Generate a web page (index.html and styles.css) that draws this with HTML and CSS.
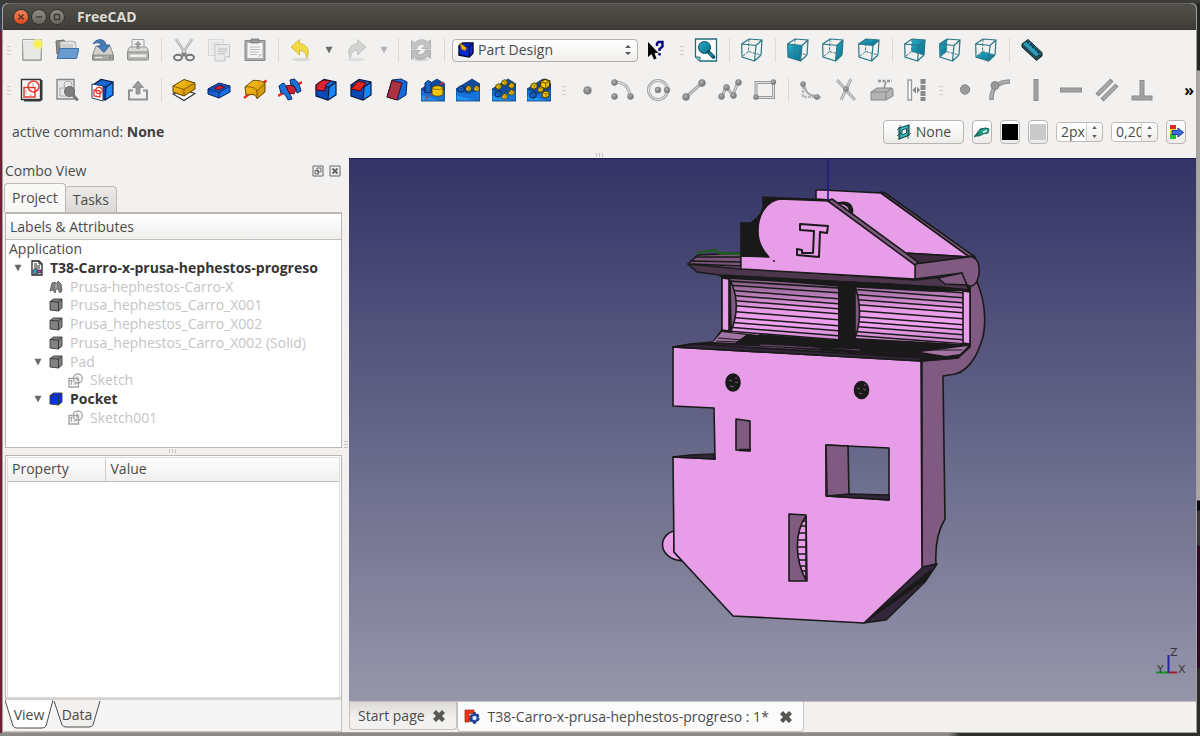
FILE: index.html
```html
<!DOCTYPE html>
<html lang="en">
<head>
<meta charset="utf-8">
<title>FreeCAD</title>
<link rel="stylesheet" href="styles.css">
</head>
<body>
<svg class="sprites" aria-hidden="true">
  <defs>
    <linearGradient id="g-gold" x1="0" y1="0" x2="1" y2="1"><stop offset="0" stop-color="#ffc81e"/><stop offset="1" stop-color="#c98a00"/></linearGradient>
    <linearGradient id="g-blue" x1="0" y1="0" x2="1" y2="1"><stop offset="0" stop-color="#0a3fae"/><stop offset="1" stop-color="#1f86f5"/></linearGradient>
    <linearGradient id="g-teal" x1="0" y1="0" x2="1" y2="1"><stop offset="0" stop-color="#2ba9c9"/><stop offset="1" stop-color="#04708c"/></linearGradient>
    <linearGradient id="g-grey" x1="0" y1="0" x2="0" y2="1"><stop offset="0" stop-color="#f4f4f4"/><stop offset="1" stop-color="#b4b4b4"/></linearGradient>
    <radialGradient id="g-ball" cx=".4" cy=".35"><stop offset="0" stop-color="#b4b4b4"/><stop offset="1" stop-color="#7c7c7c"/></radialGradient>
    <symbol id="ball" viewBox="0 0 8 8"><circle cx="4" cy="4" r="3.4" fill="url(#g-ball)" stroke="#868686" stroke-width=".8"/></symbol>
    <symbol id="box" viewBox="0 0 24 24"><path d="M2 7 10 1.500 22 4 15 9Z" fill="#1467d6"/><path d="M2 7 15 9 14 22 2 18Z" fill="#0a49b8"/><path d="M15 9 22 4 22 17 14 22Z" fill="#1a86f7"/><path d="M2 7 10 1.500 22 4V17L14 22 2 18ZM2 7 15 9 22 4M15 9 14 22" fill="none" stroke="#061a3f" stroke-width="1.200"/></symbol>
    <symbol id="wire" viewBox="0 0 24 24"><path d="M1.700 6 16 7.500 14.500 23 2 19ZM9 1 22 2 21 17M1.700 6 9 1M16 7.500 22 2M14.500 23 21 17" fill="none" stroke="#2b7686" stroke-width="1.200"/><path d="M9 1 8.500 13.500 21 17M8.500 13.500 2 19" fill="none" stroke="#3c7885" stroke-width="1" stroke-dasharray="3 1.200"/></symbol>
    <symbol id="hill" viewBox="0 0 24 24"><path d="M0 11 16 1 24 6V23H0Z" fill="#104c9e"/><path d="M0 12 12 16 24 12V23H0Z" fill="#1673da"/><path d="M0 23 0 17 20 23Z" fill="#2494f4"/><path d="M0 11 16 1 24 6V23H0Z" fill="none" stroke="#0b376e" stroke-width=".8"/></symbol>
    <symbol id="nugget" viewBox="0 0 8 8"><path d="M1 2.500 4 .8 7.200 2 7 5.500 4.500 7.300 1 6Z" fill="#eec40c" stroke="#453600" stroke-width=".9"/><path d="M1 2.500 4.500 3.500 7.200 2M4.500 3.500V7" fill="none" stroke="#7e6300" stroke-width=".7"/></symbol>
    <symbol id="cubelet" viewBox="0 0 8 8"><path d="M1 2.500 4 .8 7.200 2 7 5.500 4.500 7.300 1 6Z" fill="#1c6fd8" stroke="#04183d" stroke-width=".9"/><path d="M1 2.500 4.500 3.500 7.200 2M4.500 3.500V7" fill="none" stroke="#08306b" stroke-width=".7"/></symbol>
    <symbol id="mini-solid" viewBox="0 0 14 14"><path d="M1 3.500 4.500 1H13V10L9.500 13 1 12Z" fill="currentColor" stroke="#3c3c3c" stroke-width=".9"/><path d="M1 3.500 9.500 4 13 1M9.500 4V13" fill="none" stroke="#303030" stroke-width=".9"/></symbol>
    <symbol id="mini-sketch" viewBox="0 0 15 15"><path d="M1 5.500H10.500V14H1Z" fill="none" stroke="#a4a4a4" stroke-width="1.400"/><circle cx="9.800" cy="5.500" r="4.500" fill="none" stroke="#a4a4a4" stroke-width="1.300"/><path d="M3.300 7V12M2.200 8.500 3.300 7 4.500 8.500M9 3V8M5.500 11H8.500" fill="none" stroke="#999"/></symbol>
    <symbol id="tri" viewBox="0 0 8 8"><path d="M.5 .7H7.500L4 7.500Z" fill="currentColor"/></symbol>
    <symbol id="x-mark" viewBox="0 0 12 12"><path d="M3 0 6 3 9 0 12 3 9 6 12 9 9 12 6 9 3 12 0 9 3 6 0 3Z" fill="#565653"/></symbol>
  </defs>
</svg>

<div class="desktop">
<main class="window">
  <header class="titlebar">
    <button class="wm wm-close" aria-label="Close"><svg viewBox="0 0 8 8"><path d="M1.500 1.500 6.500 6.500M6.500 1.500 1.500 6.500"/></svg></button>
    <button class="wm" aria-label="Minimize"><svg viewBox="0 0 8 8"><path d="M1 4H7"/></svg></button>
    <button class="wm" aria-label="Maximize"><svg viewBox="0 0 8 8"><path d="M1.500 1.500H6.500V6.500H1.500Z"/></svg></button>
    <h1>FreeCAD</h1>
  </header>

  <div class="toolbars">
    <div class="bar">
      <i class="handle first"></i>
      <div class="group g4">
        <button aria-label="New"><svg viewBox="0 0 24 24"><path d="M2.500 1.500H21.500V22.500H2.500Z" fill="url(#g-grey)" stroke="#a6a6a0"/><path d="M4 3H20V21H4Z" fill="#e8e8e6"/><circle cx="18" cy="6" r="5.500" fill="#f5f07a" opacity=".75"/><circle cx="18" cy="6" r="2.800" fill="#fdf42d"/></svg></button>
        <button aria-label="Open"><svg viewBox="0 0 24 24"><path d="M1 3 9 2 10 4H20V16H2Z" fill="#8c8c88" stroke="#6d6d69"/><path d="M5 4 18 3 21 6V14H6Z" fill="#e4e4e2" stroke="#aaa" stroke-width=".8"/><path d="M7 7H18M7 9H18" stroke="#b5b5b5"/><path d="M5 10.500H24L21.500 20.500H2Z" fill="#6a9bcf" stroke="#3e6fa6"/></svg></button>
        <button aria-label="Save"><svg viewBox="0 0 24 24"><path d="M5 8H19L22.500 17V22H1.500V17Z" fill="#d2d2ce" stroke="#8b8b86"/><path d="M2 17H22V22H2Z" fill="#aaaaa6" stroke="#858580" stroke-width=".8"/><path d="M4 19.500H11" stroke="#eee"/><circle cx="19" cy="19.500" r="1" fill="#6f6f6c"/><path d="M2 6C5 0 14 0 15 7H19L13 14.500 6.500 8H10C9 4 6 4 2 6Z" fill="#4a7eba" stroke="#285790" stroke-width=".8"/></svg></button>
        <button aria-label="Print"><svg viewBox="0 0 24 24"><path d="M6 1.500H18V12H6Z" fill="#f2f2f2" stroke="#a3a3a3"/><path d="M2 11 4 9H20L22 11V17H2Z" fill="#d8d8d6" stroke="#979793"/><path d="M1.500 14H22.500V21Q22.500 22 21 22H3Q1.500 22 1.500 21Z" fill="#b6b6b3" stroke="#8a8a86"/><path d="M4 16.500H20V19H4Z" fill="#eee"/><path d="M12 3 16 7H13.500V11H10.500V7H8Z" fill="#9b9b9b"/></svg></button>
      </div>
      <i class="sep"></i>
      <div class="group g3">
        <button aria-label="Cut"><svg viewBox="0 0 24 24"><path d="M4 1 14.500 17M20 1 9.500 17" stroke="#b5b5b5" stroke-width="2.800"/><path d="M4.500 1 14.500 17M19.500 1 9.500 17" stroke="#ddd"/><ellipse cx="6" cy="19.500" rx="4" ry="2.800" fill="none" stroke="#777" stroke-width="2"/><ellipse cx="18" cy="19.500" rx="4" ry="2.800" fill="none" stroke="#777" stroke-width="2"/><path d="M10 15 13.500 18M14 15 10.500 18" stroke="#808080" stroke-width="2"/></svg></button>
        <button aria-label="Copy"><svg viewBox="0 0 24 24"><path d="M1.500 1.500H16V17.500H1.500Z" fill="#ededed" stroke="#d6d6d6"/><path d="M4 5H13M4 8H10M4 11H8" stroke="#d8d8d8"/><path d="M8 6.500H22.500V19L18 23H8Z" fill="#eaeaea" stroke="#c5c5c5"/><path d="M11 11H20M11 13.500H20M11 16H18" stroke="#c9c9c9" stroke-width="1.300"/><path d="M22.500 19H18V23" fill="#fff" stroke="#bbb"/></svg></button>
        <button aria-label="Paste"><svg viewBox="0 0 24 24"><path d="M2 2.500H22V22.500H2Z" fill="#aaa" stroke="#878787"/><path d="M4.500 5H19.500V20H4.500Z" fill="#f4f4f4"/><path d="M8 1H16V5H8Z" fill="#999" stroke="#777" stroke-width=".8"/><path d="M7 9H17M7 11.500H17M7 14H16M7 16.500H14" stroke="#bcbcbc"/><path d="M19.500 16H15.500V20Z" fill="#ccc"/></svg></button>
      </div>
      <i class="sep"></i>
      <button class="tool" aria-label="Undo"><svg viewBox="0 0 24 24"><ellipse cx="12" cy="21.500" rx="9" ry="1.800" fill="#dadad6"/><path d="M2 9 10.500 1.500V5.500C18 6 22 13 17.500 20.500 17 15 15 12.500 10.500 12.500V17Z" fill="#f2da44" stroke="#cbb331" stroke-width=".8"/></svg></button>
      <button class="drop" aria-label="Undo list"><svg viewBox="0 0 8 8"><use href="#tri"/></svg></button>
      <button class="tool" aria-label="Redo"><svg viewBox="0 0 24 24"><ellipse cx="12" cy="21.500" rx="9" ry="1.800" fill="#e0e0de"/><path d="M22 9 13.500 1.500V5.500C6 6 2 13 6.500 20.500 7 15 9 12.500 13.500 12.500V17Z" fill="#d2d2d0" stroke="#bdbdbb" stroke-width=".8"/></svg></button>
      <button class="drop pale" aria-label="Redo list"><svg viewBox="0 0 8 8"><use href="#tri"/></svg></button>
      <i class="sep"></i>
      <button class="tool" aria-label="Refresh"><svg viewBox="0 0 24 24"><ellipse cx="12" cy="21.500" rx="8" ry="1.800" fill="#d6d6d4"/><path d="M2.500 11V2.500L5.500 5C10 .5 16 1 18.500 4L21.500 2V10.500H13L16 7.500C13 5 9 6.500 7.500 11Z" fill="#c4c4c2" stroke="#aaa" stroke-width=".8"/><path d="M21.500 12V20.500L18.500 18C14 22.500 8 22 5.500 19L2.500 21.500V12.500H11L8 15.500C11 18 15 16.500 16.500 12Z" fill="#bebebc" stroke="#a2a2a2" stroke-width=".8"/></svg></button>
      <i class="sep"></i>
      <label class="combo">
        <svg viewBox="0 0 17 17"><path d="M1 4 5 1H16V12L12 16 1 14Z" fill="#0a28d0" stroke="#000520" stroke-width="1.300"/><path d="M1 4 12 5 16 1M12 5V16" stroke="#000a40" stroke-width="1.200" fill="none"/><path d="M2 1 9 6 8 9 4 8Z" fill="#f1ab13" stroke="#9c6b00" stroke-width=".6"/></svg>
        <select aria-label="Workbench"><option>Part Design</option></select>
        <span class="arrows"><svg viewBox="0 0 8 12"><path d="M1 4 4 1 7 4ZM1 8 4 11 7 8Z" fill="#555"/></svg></span>
      </label>
      <button class="tool" aria-label="What's this?"><svg viewBox="0 0 24 24"><path d="M3 4V19L6.500 16 9 21.500 11.500 20.500 9.500 15H13.500Z" fill="#000"/><path d="M12 8V5.500L13.500 4H17.500V8.500L14.500 11V13M14.500 15V17.500" stroke="#060680" stroke-width="2.400" fill="none"/></svg></button>
      <i class="handle mid"></i>
      <button class="tool" aria-label="Fit all"><svg viewBox="0 0 24 24"><path d="M1.500 1H22.500V23H6L1.500 19Z" fill="#fff" stroke="#236c7a" stroke-width="1.300"/><path d="M1.500 19H6V23" fill="#9cc" stroke="#236c7a"/><circle cx="10.500" cy="9.500" r="6" fill="url(#g-teal)" stroke="#044c5f"/><path d="M14.500 14 19.500 19" stroke="#07495a" stroke-width="3.800" stroke-linecap="round"/><path d="M15 14.500 19 18.500" stroke="#1e8ca6" stroke-width="1.800"/></svg></button>
      <i class="sep"></i>
      <button class="tool" aria-label="Axonometric"><svg viewBox="0 0 24 24"><use href="#wire"/></svg></button>
      <i class="sep"></i>
      <div class="group g3">
        <button aria-label="Front"><svg viewBox="0 0 24 24"><path d="M1.700 6 16 7.500 14.500 23 2 19Z" fill="url(#g-teal)"/><use href="#wire"/></svg></button>
        <button aria-label="Right"><svg viewBox="0 0 24 24"><path d="M16 7.500 22 2 21 17 14.500 23Z" fill="url(#g-teal)"/><use href="#wire"/></svg></button>
        <button aria-label="Top"><svg viewBox="0 0 24 24"><path d="M1.700 6 9 1 22 2 16 7.500Z" fill="url(#g-teal)"/><use href="#wire"/></svg></button>
      </div>
      <i class="sep"></i>
      <div class="group g3">
        <button aria-label="Rear"><svg viewBox="0 0 24 24"><path d="M9 1 22 2 21 17 8.500 13.500Z" fill="url(#g-teal)"/><use href="#wire"/></svg></button>
        <button aria-label="Left"><svg viewBox="0 0 24 24"><path d="M1.700 6 9 1 8.500 13.500 2 19Z" fill="url(#g-teal)"/><use href="#wire"/></svg></button>
        <button aria-label="Bottom"><svg viewBox="0 0 24 24"><path d="M2 19 8.500 13.500 21 17 14.500 23Z" fill="url(#g-teal)"/><use href="#wire"/></svg></button>
      </div>
      <i class="sep"></i>
      <button class="tool" aria-label="Measure distance"><svg viewBox="0 0 24 24"><path d="M2 6 8 1.500 22 14.500V18L16.500 22.500 2 9Z" fill="#25474f" stroke="#13262b"/><path d="M3 6 8 2.500 21 14.500 16 18.500Z" fill="#2c9cbc"/><path d="M7 3.500 9 5.500M10 6 11.500 7.500M12 8 14 10M15 10.500 16.500 12M17 12.500 19.500 15" stroke="#0a2f3c" stroke-width="1.800"/></svg></button>
    </div>

    <div class="bar">
      <i class="handle first"></i>
      <div class="group g4">
        <button aria-label="New sketch"><svg viewBox="0 0 24 24"><path d="M3 2 22.500 2V22L20 23.500H4Z" fill="#3d3d3d"/><path d="M1.500 1.500H20.500V21.500H1.500Z" fill="#fff" stroke="#333" stroke-width="1.400"/><path d="M4 9.500H15V19H4Z" fill="none" stroke="#e33b2e" stroke-width="1.500"/><circle cx="13.500" cy="8.500" r="5.500" fill="none" stroke="#e33b2e" stroke-width="1.500"/><path d="M6 12V16M9 17H12M13 5V9" stroke="#c99" stroke-width="1"/></svg></button>
        <button aria-label="View sketch"><svg viewBox="0 0 24 24"><path d="M2 1.500H19V21H2Z" fill="#e6e6e6" stroke="#888" stroke-width="1.400"/><path d="M5 10H14V18H5Z" fill="none" stroke="#aaa"/><circle cx="13" cy="7" r="4" fill="none" stroke="#aaa"/><circle cx="14.500" cy="13.500" r="5" fill="#7d7d7d" stroke="#696969"/><path d="M18 17 22 21.500" stroke="#777" stroke-width="3" stroke-linecap="round"/></svg></button>
        <button aria-label="Map sketch"><svg viewBox="0 0 24 24"><use href="#box"/><path d="M1 6 12 8V23L1 20Z" fill="#fff" stroke="#25395c"/><path d="M3 12 9 13V19L3 18Z" fill="none" stroke="#e33b2e" stroke-width="1.300"/><circle cx="8" cy="12.500" r="3.200" fill="none" stroke="#e33b2e" stroke-width="1.200"/></svg></button>
        <button aria-label="Leave sketch"><svg viewBox="0 0 24 24"><path d="M7 12.500H3V21.500H21V12.500H17" fill="none" stroke="#929292" stroke-width="2"/><path d="M12 3 17.500 9.500H14V16H10V9.500H6.500Z" fill="#9a9a9a" stroke="#858585" stroke-width=".8"/></svg></button>
      </div>
      <i class="sep"></i>
      <div class="group g11">
        <button aria-label="Pad"><svg viewBox="0 0 24 24"><path d="M1 16 12 12 23 15.500 12 22.500Z" fill="#fff" stroke="#333" stroke-width="1.200"/><path d="M1 8 12 1.500 23 5V11L12 18 1 14Z" fill="url(#g-gold)" stroke="#5a3f00"/><path d="M1 8 12 11.500 23 5M12 11.500V18" fill="none" stroke="#7d5900"/></svg></button>
        <button aria-label="Pocket"><svg viewBox="0 0 24 24"><path d="M1 11 12 5 23 8V14L12 20 1 16Z" fill="url(#g-blue)" stroke="#051f54"/><path d="M1 11 12 14.500 23 8M12 14.500V20" fill="none" stroke="#062a6e"/><path d="M7 10.500 12.500 7.500 18 9 12 12Z" fill="#d4202d" stroke="#4f0620" stroke-width=".9"/></svg></button>
        <button aria-label="Revolution"><svg viewBox="0 0 24 24"><path d="M1 20 6 16M19 6 23.500 2.500" stroke="#ee2a1c" stroke-width="2.400"/><path d="M2 9 10 2.500C14 2 20 3 22 5.500V14L14 20.500C13 18 12 16.500 9 16.500L3 17Z" fill="url(#g-gold)" stroke="#6b4600"/><path d="M2 9C8 8 13 10 14 13V20.500M14 13 22 5.500" fill="none" stroke="#7d5900"/></svg></button>
        <button aria-label="Groove"><svg viewBox="0 0 24 24"><path d="M0 18 24 4" stroke="#ee2a1c" stroke-width="2.400"/><path d="M1 8 5 5C8 6 10 11 14 21L10 22C8 17 5 15 3 15Z" fill="#1d70d8" stroke="#06275a"/><path d="M8 8 14 7 18 11 16 16 11 15Z" fill="#ca2331" stroke="#620a18"/><path d="M12 2 16 1C20 3 22 8 23 13L19 15C18 9 16 7 13 7Z" fill="#1d70d8" stroke="#06275a"/></svg></button>
        <button aria-label="Fillet"><svg viewBox="0 0 24 24"><use href="#box"/><path d="M2 12C2 6 4 4.500 10 2L17 3C12 5 11 8 11 13Z" fill="#db2330" stroke="#4b0714"/></svg></button>
        <button aria-label="Chamfer"><svg viewBox="0 0 24 24"><use href="#box"/><path d="M2 11 9 3 17 5 11 13Z" fill="#e2231c" stroke="#4b0714"/></svg></button>
        <button aria-label="Draft"><svg viewBox="0 0 24 24"><path d="M7 2 16 1 22 4 21 17 13 22 2 19Z" fill="#1668d8" stroke="#06275a"/><path d="M7 2.500 17 5 12 22 2 19Z" fill="#a93544" stroke="#4b0714"/></svg></button>
        <button aria-label="Mirrored"><svg viewBox="0 0 24 24"><use href="#hill"/><path d="M4 5 7 2.500 10 4V14L4 15Z" fill="#1763c4" stroke="#06275a"/><path d="M11 10C12 7 21 7 22 10V16C21 19 12 19 11 16Z" fill="#f0c60d" stroke="#5a4500"/><path d="M11 10C13 12 20 12 22 10" fill="none" stroke="#8d6c00"/><path d="M4 21 10 16M19 6 24 4" stroke="#d0263c" stroke-width="1.400" stroke-dasharray="4 2"/></svg></button>
        <button aria-label="Linear pattern"><svg viewBox="0 0 24 24"><use href="#hill"/><use href="#cubelet" x="1" y="7" width="8" height="8"/><use href="#nugget" x="9" y="7" width="7" height="7"/><use href="#nugget" x="17" y="7" width="7" height="7"/></svg></button>
        <button aria-label="Polar pattern"><svg viewBox="0 0 24 24"><use href="#hill"/><use href="#nugget" x="9" y="1" width="7" height="7"/><use href="#nugget" x="3" y="5" width="7" height="7"/><use href="#nugget" x="16" y="4" width="7" height="7"/><use href="#nugget" x="16" y="11" width="7" height="7"/><use href="#nugget" x="9" y="15" width="7" height="7"/><use href="#cubelet" x="2" y="12" width="8" height="8"/></svg></button>
        <button aria-label="Multi transform"><svg viewBox="0 0 24 24"><use href="#hill"/><use href="#nugget" x="12" y="0" width="12" height="12"/><use href="#nugget" x="3" y="4" width="8" height="8"/><use href="#nugget" x="10" y="8" width="7" height="7"/><use href="#nugget" x="14" y="12" width="9" height="9"/><use href="#cubelet" x="2" y="13" width="8" height="8"/></svg></button>
      </div>
      <i class="handle mid"></i>
      <div class="group g6">
        <button aria-label="Point"><svg viewBox="0 0 24 24"><use href="#ball" x="7" y="8" width="9" height="9"/></svg></button>
        <button aria-label="Arc"><svg viewBox="0 0 24 24"><path d="M5 4C13 4 19 10 19 19" fill="none" stroke="#aaa" stroke-width="3"/><path d="M5 4C13 4 19 10 19 19" fill="none" stroke="#eee"/><use href="#ball" x="0" y="1" width="7" height="7"/><use href="#ball" x="0" y="15" width="7" height="7"/><use href="#ball" x="16" y="15" width="7" height="7"/></svg></button>
        <button aria-label="Circle"><svg viewBox="0 0 24 24"><circle cx="11" cy="12" r="9.500" fill="none" stroke="#a4a4a4" stroke-width="3"/><circle cx="11" cy="12" r="9.500" fill="none" stroke="#eee"/><use href="#ball" x="7.500" y="8.500" width="7" height="7"/><use href="#ball" x="16.500" y="8.500" width="7" height="7"/></svg></button>
        <button aria-label="Line"><svg viewBox="0 0 24 24"><path d="M4 19 20 5" stroke="#a0a0a0" stroke-width="3.200"/><path d="M4 19 20 5" stroke="#e2e2e2"/><use href="#ball" x="0" y="15" width="8" height="8"/><use href="#ball" x="16" y="1" width="8" height="8"/></svg></button>
        <button aria-label="Polyline"><svg viewBox="0 0 24 24"><path d="M4 18 8 9 15 17 20 4" fill="none" stroke="#a0a0a0" stroke-width="3"/><path d="M4 18 8 9 15 17 20 4" fill="none" stroke="#ddd"/><use href="#ball" x="0" y="15" width="7" height="7"/><use href="#ball" x="5" y="6" width="7" height="7"/><use href="#ball" x="12" y="14" width="7" height="7"/><use href="#ball" x="17" y="1" width="7" height="7"/></svg></button>
        <button aria-label="Rectangle"><svg viewBox="0 0 24 24"><path d="M3 4.500H20.500V19.500H3Z" fill="none" stroke="#9c9c9c" stroke-width="3"/><path d="M3 4.500H20.500V19.500H3Z" fill="none" stroke="#e2e2e2"/><use href="#ball" x="17.500" y="1" width="6" height="6"/><use href="#ball" x="0" y="16" width="6" height="6"/></svg></button>
      </div>
      <i class="sep"></i>
      <div class="group g4">
        <button aria-label="Sketch fillet"><svg viewBox="0 0 24 24"><path d="M4 4V19H22" fill="none" stroke="#bbb" stroke-width="2.400" stroke-dasharray="3 1"/><path d="M5 6C6 14 10 18 17 18" fill="none" stroke="#aaa" stroke-width="2"/><use href="#ball" x="1" y="3" width="6" height="6"/><use href="#ball" x="15" y="16" width="6" height="6"/></svg></button>
        <button aria-label="Trim"><svg viewBox="0 0 24 24"><path d="M3 2 21 22M17 1 7 22" stroke="#a5a5a5" stroke-width="3"/><path d="M3 2 21 22M17 1 7 22" stroke="#e0e0e0"/><use href="#ball" x="9" y="8" width="6" height="6"/></svg></button>
        <button aria-label="External geometry"><svg viewBox="0 0 24 24"><path d="M8 3H22" stroke="#999" stroke-width="2.400" stroke-dasharray="3 1.500"/><path d="M16 4 14 10" stroke="#888" stroke-width="1.400"/><path d="M1 14 7 10H22L23 12V18L16 22H1Z" fill="#b4b4b4" stroke="#888"/><path d="M1 14H16L22 10M16 14V22" fill="none" stroke="#858585"/></svg></button>
        <button aria-label="Construction mode"><svg viewBox="0 0 24 24"><path d="M3 2H6.500V22H3Z" fill="#fff" stroke="#999" stroke-width="1.300"/><path d="M18 1V23" stroke="#888" stroke-width="5" stroke-dasharray="5 1"/><path d="M7.500 12 11 8.500V15.500ZM15 12 12 8.500V15.500Z" fill="#888"/></svg></button>
      </div>
      <i class="handle"></i>
      <div class="group g6">
        <button aria-label="Coincident"><svg viewBox="0 0 24 24"><circle cx="12" cy="11.500" r="4.700" fill="#9a9a9a" stroke="#858585"/></svg></button>
        <button aria-label="Point on object"><svg viewBox="0 0 24 24"><path d="M3.500 22C3 12 8 3.500 22 3.500" fill="none" stroke="#8d8d8d" stroke-width="4.500"/><path d="M3.500 21C3 12 8 3.500 21 3.500" fill="none" stroke="#acacac" stroke-width="2.500"/><circle cx="7" cy="7.500" r="4" fill="#999" stroke="#838383"/></svg></button>
        <button aria-label="Vertical"><svg viewBox="0 0 24 24"><path d="M12 1V23" stroke="#8b8b8b" stroke-width="5"/><path d="M12 2V22" stroke="#a2a2a2" stroke-width="3"/></svg></button>
        <button aria-label="Horizontal"><svg viewBox="0 0 24 24"><path d="M1 12H23" stroke="#8b8b8b" stroke-width="5"/><path d="M2 12H22" stroke="#a2a2a2" stroke-width="3"/></svg></button>
        <button aria-label="Parallel"><svg viewBox="0 0 24 24"><path d="M2 17 17 2M7 22 22 7" stroke="#8b8b8b" stroke-width="4.500"/><path d="M3 16 16 3M8 21 21 8" stroke="#a8a8a8" stroke-width="2.500"/></svg></button>
        <button aria-label="Perpendicular"><svg viewBox="0 0 24 24"><path d="M12 2V20M1.500 20H22.500" stroke="#8b8b8b" stroke-width="5"/><path d="M12 3V20M2.500 20H21.500" stroke="#a2a2a2" stroke-width="3"/></svg></button>
      </div>
      <button class="more" aria-label="More tools">»</button>
    </div>

    <div class="bar draft">
      <p>active command: <b>None</b></p>
      <div class="draft-tools">
        <button class="push plane"><svg viewBox="0 0 16 16"><path d="M3 4 13 1V11L3 15Z" fill="#3cc3bd" stroke="#174d52" stroke-width="1.200"/><path d="M6 6 10.500 4.500V9L6 11Z" fill="#eee" stroke="#174d52"/><path d="M1 6 4 3M1 12 5 8M11 13 15 9M4 15V1M12 15V1" stroke="#174d52" stroke-width=".8"/></svg>None</button>
        <button class="push sq" aria-label="Construction mode"><svg viewBox="0 0 16 16"><path d="M1 12 6 5 12 4 15 5 14 9 9 10 5 12Z" fill="#1d9c84" stroke="#0c5447" stroke-width=".9"/><path d="M9 8.500 13 6.500" stroke="#bdf0e2" stroke-width="2"/><path d="M0 13 5 9" stroke="#13705f" stroke-width="1.500"/></svg></button>
        <button class="push sq" aria-label="Line color"><i class="swatch black"></i></button>
        <button class="push sq" aria-label="Face color"><i class="swatch light"></i></button>
        <span class="spin"><input type="text" value="2px" aria-label="Line width"><span><button aria-label="Wider"><svg viewBox="0 0 6 4"><path d="M0 4 3 0 6 4Z"/></svg></button><button aria-label="Thinner"><svg viewBox="0 0 6 4"><path d="M0 0 3 4 6 0Z"/></svg></button></span></span>
        <span class="spin"><input type="text" value="0,20" aria-label="Font size"><span><button aria-label="Larger"><svg viewBox="0 0 6 4"><path d="M0 4 3 0 6 4Z"/></svg></button><button aria-label="Smaller"><svg viewBox="0 0 6 4"><path d="M0 0 3 4 6 0Z"/></svg></button></span></span>
        <button class="push sq" aria-label="Apply style"><svg viewBox="0 0 16 16"><path d="M2 1H8V5H2Z" fill="#e02a1e"/><path d="M2 5H8V10H2Z" fill="#f2e21c"/><path d="M2 10H8V15H2Z" fill="#23c52c"/><path d="M4 6.500H10V4L15.500 8.500 10 13V10.500H4Z" fill="#3d6ee0" stroke="#17348c" stroke-width=".9"/></svg></button>
      </div>
    </div>
    <i class="grip"></i>
  </div>

  <div class="work">
    <aside class="dock">
      <div class="dock-title">
        <h2>Combo View</h2>
        <button aria-label="Float"><svg viewBox="0 0 12 12"><path d="M1 1H11V11H1Z" fill="none"/><path d="M5 3H9V7H5ZM3 5.500H6.500V9H3Z" fill="none"/></svg></button>
        <button aria-label="Close panel"><svg viewBox="0 0 12 12"><path d="M1 1H11V11H1Z" fill="none"/><path d="M3.500 3.500 8.500 8.500M8.500 3.500 3.500 8.500" stroke-width="2"/></svg></button>
      </div>
      <div class="tabs">
        <button class="active">Project</button><button>Tasks</button>
      </div>
      <section class="tree">
        <div class="head">Labels &amp; Attributes</div>
        <ul>
          <li>Application</li>
          <li class="l1 strong"><svg class="tw" viewBox="0 0 8 8"><use href="#tri"/></svg><svg class="doc" viewBox="0 0 12 16"><path d="M1 1H8L11 4V15H1Z" fill="#fff" stroke="#222" stroke-width="1.300"/><path d="M8 1V4H11M3 4H6M3 6H9M3 8H9" fill="none" stroke="#222"/><circle cx="4.500" cy="11.500" r="2.500" fill="#35a9b5" stroke="#222" stroke-width=".7"/><path d="M6 10H10V13H6Z" fill="#b23bc4" stroke="#222" stroke-width=".7"/></svg>T38-Carro-x-prusa-hephestos-progreso</li>
          <li class="l2 off"><svg viewBox="0 0 14 14"><path d="M1 11 3 3 6 2 7 5 9 1 12 4 13 11 11 13 9 9 7 9 6 13 4 10Z" fill="#808080" stroke="#5c5c5c" stroke-width=".9"/><path d="M7 4V9" stroke="#ccc" stroke-width=".8"/></svg>Prusa-hephestos-Carro-X</li>
          <li class="l2 off"><svg viewBox="0 0 14 14"><use href="#mini-solid"/></svg>Prusa_hephestos_Carro_X001</li>
          <li class="l2 off"><svg viewBox="0 0 14 14"><use href="#mini-solid"/></svg>Prusa_hephestos_Carro_X002</li>
          <li class="l2 off"><svg viewBox="0 0 14 14"><use href="#mini-solid"/></svg>Prusa_hephestos_Carro_X002 (Solid)</li>
          <li class="l2t off"><svg class="tw" viewBox="0 0 8 8"><use href="#tri"/></svg><svg viewBox="0 0 14 14"><use href="#mini-solid"/></svg>Pad</li>
          <li class="l3 off"><svg class="sk" viewBox="0 0 15 15"><use href="#mini-sketch"/></svg>Sketch</li>
          <li class="l2t strong"><svg class="tw" viewBox="0 0 8 8"><use href="#tri"/></svg><svg class="live" viewBox="0 0 14 14"><use href="#mini-solid"/></svg>Pocket</li>
          <li class="l3 off"><svg class="sk" viewBox="0 0 15 15"><use href="#mini-sketch"/></svg>Sketch001</li>
        </ul>
      </section>
      <i class="grip"></i>
      <section class="props">
        <table><thead><tr><th scope="col">Property</th><th scope="col">Value</th></tr></thead></table>
      </section>
      <div class="bottom-tabs">
        <button><svg viewBox="0 0 48 29" preserveAspectRatio="none"><path d="M0 0 8 26Q9 28 12 28H37Q40 28 41 26L48 0" fill="#fff" stroke="#4e4e4c"/></svg><span>View</span></button>
        <button class="low"><svg viewBox="0 0 48 29" preserveAspectRatio="none"><path d="M1 1 9 25Q10 27 13 27H36Q39 27 40 25L47 1" fill="#f1f0ee" stroke="#4e4e4c"/></svg><span>Data</span></button>
      </div>
    </aside>
    <i class="vgrip"></i>

    <section class="mdi">
      <div class="viewport">
        <svg viewBox="349 159 847 542" role="img" aria-label="3D view of the carriage model">
          <defs>
            <linearGradient id="g-bore" x1="0" y1="0" x2="0" y2="1"><stop offset="0" stop-color="#7d587d"/><stop offset=".45" stop-color="#e79be6"/><stop offset=".7" stop-color="#f0a2f1"/><stop offset="1" stop-color="#c384c3"/></linearGradient>
            <clipPath id="c-left"><path d="M730 279 838 285V343L730 332C737 315 737 296 730 279Z"/></clipPath>
            <clipPath id="c-right"><path d="M855 284 963 291V344L855 338C861 318 861 302 855 284Z"/></clipPath>
          </defs>
          <g stroke="#1a1a1a" stroke-width="1.600" stroke-linejoin="round">
            <path d="M674 531C658 535 657 558 682 561L674 552Z" fill="#e79de7"/>
            <path d="M922 361 958 358 970 347V284L977 282C987 305 986 330 981 343 975 362 964 372 955 374L943 376 945 519C937 532 935 546 936 564L922 568Z" fill="#805a80"/>
            <path d="M922 567 937 564 925 582 886 620 863 623Z" fill="#33253a"/>
            <path d="M864 622 930 571 925 580Z" fill="#191919"/>
            <path d="M722 330 713 342 690 344 673 347 921 361 957 358 970 346V343Z" fill="#1c191c"/>
            <path d="M722 332 713 342 735 343 746 335ZM921 352 968 346 960 354 946 356Z" fill="#a374a3" stroke="none"/>
            <path d="M718 338 742 340M716 341 740 342M930 350 962 350" stroke-width="1.200"/>
            <path d="M715 345 780 348 830 352 880 356 900 358 840 355 700 347ZM757 341 790 345M800 345 860 350M760 345 820 348" fill="none" stroke="#65476a" stroke-width="1.200"/>
            <path d="M722 277 970 288V345L722 331Z" fill="#191919"/>
            <path d="M730 279 838 285V343L730 332C737 315 737 296 730 279ZM855 284 963 291V344L855 338C861 318 861 302 855 284Z" fill="url(#g-bore)" stroke="none"/>
            <g clip-path="url(#c-left)" stroke-width="1.500"><path d="M728 281 840 288M728 285 840 293M728 290 840 299M728 295 840 304M728 300 840 309M728 305 840 314M728 311 840 320M728 317 840 326M728 322 840 331M728 327 840 336M728 331 840 340"/></g>
            <g clip-path="url(#c-right)" stroke-width="1.500"><path d="M850 285 965 293M850 289 965 298M850 294 965 303M850 299 965 308M850 304 965 313M850 310 965 319M850 316 965 325M850 321 965 330M850 326 965 335M850 331 965 340M850 335 965 344"/></g>
            <path d="M730 280C738 296 738 314 731 331ZM855 287C861 302 861 322 855 338Z" fill="#805a80"/>
            <path d="M722 278 729 279V331L722 330ZM963 291 970 292V344L963 343Z" fill="#e79de7"/>
            <path d="M760 334 838 340 846 345 920 344 940 346 920 351 820 348 745 342Z" fill="#191919" stroke="none"/>
            <path d="M697 272 688 264 741 268 915 280 962 275 969 290 940 287 720 275Z" fill="#4c364c"/>
            <path d="M720 276 800 280 890 284 968 290 930 291 840 286Z" fill="#191919"/>
            <path d="M688 264 698 255 741 253V269Z" fill="#795579"/>
            <path d="M695 257 741 257M690 261 741 262M692 264 741 266" fill="none"/>
            <path d="M697 253 715 250 719 253 741 254" fill="none" stroke="#1f5e1f" stroke-width="2.500"/>
            <path d="M816 199V190L823 190 881 193 970 257 905 253 830 200Z" fill="#e79de7"/>
            <path d="M880 192 885 193 975 257 968 256Z" fill="#805a80"/>
            <path d="M838 203C850 200 854 207 852 215Z" fill="#191919"/><path d="M841 205Q847 206 848 210" fill="none" stroke="#e79de7"/>
            <path d="M904 253 970 257 915 264Z" fill="#3c2a3e"/>
            <path d="M915 264 968 257C983 253 982 285 971 286 964 286 963 281 962 273L915 279Z" fill="#805a80"/>
            <path d="M938 278 962 273 967 285 945 284Z" fill="#805a80"/>
            <path d="M741 223H751Q763 214 763 207V197L828 200 769 257 741 256Z" fill="#191919"/>
            <path d="M741 256 769 257C761 249 758 240 758 231 758 214 767 201 780 199L829 201 915 264V279L741 269Z" fill="#e79de7" stroke-width="1.400"/>
            <path d="M828 201 832 199 918 262 915 265Z" fill="#805a80"/>
            <path d="M800 224 828 226 827 233 820 232 819 257 797 255V249L802 250V253L813 253 814 231 800 230Z" fill="none" stroke-width="2"/>
            <path d="M673 347 921 361 922 568 864 623 733 616 674 552 673 457 715 459 714 408 673 406ZM826 445V496L889 500V448Z" fill="#e79de7" fill-rule="evenodd"/>
            <path d="M673 347 695 344 921 358V361Z" fill="#332538"/>
            <path d="M673 457 690 455 714 454 715 459Z" fill="#332538"/>
            <path d="M826 445 848 446 849 495 827 496ZM736 419 750 421V451L736 450ZM789 514 806 515 807 581 789 581Z" fill="#805a80"/>
            <path d="M827 496 849 494 889 495V500Z" fill="#332538"/>
            <path d="M739 450H751" stroke-width="2.500"/>
            <path d="M806 516C794 533 795 560 806 580Z" fill="#e79de7"/>
            <path d="M802 521H806M800 526H806M799 533H806M797 540H806M797 547H806M797 554H806M798 560H806M800 566H806M802 571H806"/>
            <ellipse cx="733" cy="382.500" rx="7" ry="8.500" fill="#191919"/><ellipse cx="861.500" cy="390" rx="7" ry="8.500" fill="#191919"/>
            <path d="M729 380 732 381M735 382 738 383M730 386 734 387M735 378 737 378M857 388 860 389M863 389 866 390M859 393 862 394M864 385 866 385" stroke="#805a80" stroke-width="1"/>
          </g>
          <circle cx="774" cy="261" r="1" fill="#191919"/>
          <path d="M828 159V200" stroke="#1d1d82" stroke-width="1.600"/>
          <g class="axes"><path d="M1156 672.500H1169" stroke="#12971e"/><path d="M1169 672.500H1177" stroke="#a32229"/><path d="M1168.500 655V673" stroke="#2424a8"/><text x="1170" y="656">Z</text><text x="1157" y="673">Y</text><text x="1178" y="673">X</text></g>
        </svg>
      </div>
      <div class="doc-tabs">
        <div class="doc-tab"><a href="#start">Start page</a><button aria-label="Close Start page"><svg viewBox="0 0 12 12"><use href="#x-mark"/></svg></button></div>
        <div class="doc-tab active"><svg class="logo" viewBox="0 0 16 16"><path d="M1 1H10V4.500H5V7H8V10H5V13H1Z" fill="#ee3516" stroke="#9d1b0a" stroke-width=".7"/><path d="M9.500 3.500H11.500L12 5.500 14 5 15 7 14 8.500 15.500 10 14 12 12.500 12 11.500 14.500H9.500L8.500 12.500 6 12.500 5.500 10.500 7 9 6 7 7.500 5.500 9 6Z" fill="#1c43a0" stroke="#0f2a6c" stroke-width=".6"/><circle cx="10.500" cy="9" r="2.200" fill="#dbe6ff"/></svg><a href="#doc">T38-Carro-x-prusa-hephestos-progreso : 1*</a><button aria-label="Close document"><svg viewBox="0 0 12 12"><use href="#x-mark"/></svg></button></div>
      </div>
    </section>
  </div>
</main>
</div>
</body>
</html>
```

FILE: styles.css
```css
* { box-sizing: border-box; }

body {
  margin: 0;
  color: #4b4b4a;
  font: 14px/20px "Open Sans", "Noto Sans", sans-serif;
}

button, input, select { font: inherit; color: inherit; }
button { margin: 0; padding: 0; border: 0; background: none; }
h1, h2, p, ul { margin: 0; padding: 0; }
svg { display: block; flex: none; }
.sprites { position: absolute; width: 0; height: 0; }

/* Desktop showing around the window */
.desktop {
  display: flex;
  min-height: 100vh;
  padding: 3px 3px 3px 2px;
  background:
    linear-gradient(#3c3b37, #3c3b37) top / 100% 3px no-repeat,
    linear-gradient(90deg, #8b8a88 79%, #2f302e 80%) bottom / 100% 3px no-repeat,
    linear-gradient(#343f50 30px, #6d2136 31px) left / 2px 100% no-repeat,
    linear-gradient(#262724 70px, #a9a7a5 71px 500px, #080808 501px 510px, #3a3a38 511px 545px, #2d0a27 546px 668px, #2c2d2b 669px) right / 3px 100% no-repeat,
    #3c3b37;
}

.window {
  display: flex;
  flex: 1;
  flex-direction: column;
  min-width: 0;
  border: solid #a6a19d;
  border-width: 0 1px 1px;
  border-radius: 6px 6px 0 0;
  background: #f2f1f0;
}

.titlebar {
  display: flex;
  align-items: center;
  gap: 2px;
  height: 27px;
  padding: 0 10px;
  border-top: 1px solid #65645e;
  border-bottom: 1px solid #35342f;
  border-radius: 6px 6px 0 0;
  background: linear-gradient(#504f4a, #3e3d38);
}
.titlebar h1 { margin-left: 10px; color: #dfdbd2; font-size: 14px; line-height: 20px; }
.wm {
  display: grid;
  place-items: center;
  width: 16px;
  height: 16px;
  border: 1px solid #33322e;
  border-radius: 50%;
  background: linear-gradient(#8d8b84, #66645d);
}
.wm-close { background: linear-gradient(#f5835c, #dd4a1c); }
.wm svg { width: 8px; height: 8px; }
.wm path { fill: none; stroke: #393833; stroke-width: 1.3; }

/* Toolbars */
.bar { display: flex; align-items: center; height: 40px; }
.toolbars { position: relative; height: 128px; }
.group { display: grid; grid-auto-columns: 1fr; grid-auto-flow: column; flex: none; }
.g3 { width: 107px; }
.g4 { width: 142px; }
.g6 { width: 213px; }
.g11 { width: 391px; }
.tool { flex: none; width: 36px; }
.group button, .tool, .drop { display: grid; place-items: center; height: 32px; }
.group svg, .tool svg { width: 24px; height: 24px; }
.drop { flex: none; width: 19px; color: #6b6b69; }
.drop svg { width: 8px; height: 8px; }
.pale { color: #b5b4b2; }
.sep { flex: none; width: 10px; height: 24px; background: linear-gradient(#dcdad8, #dcdad8) center / 1px 100% no-repeat; }
.handle {
  flex: none;
  width: 12px;
  height: 9px;
  background: repeating-linear-gradient(#cfcecc 0 1px, transparent 1px 4px) center / 4px 100% no-repeat;
}
.first { width: 11px; }
.mid { width: 13px; }

.combo {
  display: flex;
  flex: none;
  align-items: center;
  gap: 4px;
  width: 186px;
  height: 23px;
  margin: 0 1px 0 3px;
  padding: 0 5px;
  border: 1px solid #b3b0ad;
  border-radius: 4px;
  background: linear-gradient(#fff, #f0efed);
}
.combo svg { width: 16px; height: 16px; }
.combo select { flex: 1; min-width: 0; padding: 0; border: 0; outline: 0; background: none; appearance: none; }
.combo .arrows svg { width: 8px; height: 12px; }
.more { margin-left: auto; padding-right: 2px; color: #000; font-size: 16px; font-weight: 700; }

.draft { justify-content: space-between; height: 43px; padding: 0 10px 0 9px; }
.draft b { color: #3f3f3e; }
.draft-tools { display: flex; gap: 8px; }
.push {
  display: grid;
  grid-auto-flow: column;
  place-content: center;
  align-items: center;
  gap: 4px;
  width: 20px;
  height: 24px;
  border: 1px solid #b8b5b2;
  border-radius: 4px;
  background: linear-gradient(#fff, #edecea);
}
.plane { width: 81px; }
.push svg { width: 16px; height: 16px; }
.swatch { width: 16px; height: 16px; }
.black { background: #000; }
.light { background: #cacaca; }
.spin {
  display: flex;
  width: 47px;
  height: 20px;
  margin: 2px 0;
  overflow: hidden;
  border: 1px solid #bebbb8;
  border-radius: 4px;
  background: linear-gradient(#fff, #edecea);
}
.spin input { width: 30px; padding: 0 0 0 4px; border: 0; border-right: 1px solid #d2d0ce; background: #fff; line-height: 18px; }
.spin > span { display: grid; flex: 1; }
.spin button { display: grid; place-items: center; }
.spin svg { width: 5px; height: 3px; fill: #5c5c5a; }

.grip {
  width: 8px;
  height: 4px;
  background: repeating-linear-gradient(90deg, #c6c4c2 0 1px, transparent 1px 3px);
}
.toolbars > .grip { position: absolute; right: 0; bottom: 1px; left: 0; margin: auto; }

/* Combo view */
.work { display: grid; grid-template-columns: minmax(240px, 339px) 7px minmax(0, 1fr); flex: 1; min-height: 0; }
.dock { display: flex; flex-direction: column; padding: 2px 0 0 1px; }
.dock-title { display: flex; align-items: center; gap: 5px; height: 22px; padding: 0 1px; }
.dock-title h2 { flex: 1; font-size: 14px; font-weight: 400; line-height: 20px; }
.dock-title svg { width: 12px; height: 12px; stroke: #666; }
.tabs { display: flex; align-items: flex-end; height: 30px; }
.tabs button {
  height: 26px;
  padding: 0 7px;
  border: 1px solid #bcb9b6;
  border-bottom: 0;
  border-radius: 4px 4px 0 0;
  background: linear-gradient(#eceae8, #dbd9d6);
}
.tabs .active { height: 29px; background: #f8f8f7; }
.tabs button + button { border-left: 0; }
.tree { height: 236px; margin-left: 1px; border: 1px solid #b9b6b3; border-top-width: 2px; background: #fff; }
.tree .head { height: 26px; padding: 3px 4px; border-bottom: 1px solid #c2bfbc; background: linear-gradient(#fff, #f0efee); }
.tree ul { display: grid; grid-template-rows: repeat(10, 1fr); height: 187px; padding-left: 3px; list-style: none; }
.tree li { display: flex; align-items: center; gap: 7px; min-height: 0; line-height: 18px; white-space: nowrap; }
.tree li svg { width: 14px; height: 14px; color: #828282; }
.tree li .tw { width: 8px; height: 8px; color: #6a6a68; }
.tree li .doc { width: 12px; height: 16px; margin-left: 2px; }
.tree li .sk { width: 15px; height: 15px; }
.tree li .live { color: #0a33ee; }
.tree .l1 { padding-left: 5px; }
.tree .l2 { padding-left: 40px; }
.tree .l2t { padding-left: 25px; }
.tree .l3 { padding-left: 59px; }
.off { color: #c5c4c3; }
.strong { color: #353534; font-weight: 700; }
.dock > .grip { align-self: center; margin: 1px 0 2px; }
.props { flex: 1; margin-left: 1px; padding: 1px; border: 1px solid #b9b6b3; border-bottom: 3px solid #d3d0cd; background: #fff; outline: 1px solid #dedcd9; outline-offset: -3px; }
.props table { width: 100%; border-collapse: collapse; }
.props th { height: 24px; padding: 0 5px; border-bottom: 1px solid #c2bfbc; background: linear-gradient(#fff, #f0efee); font-weight: 400; text-align: left; }
.props th:first-child { width: 98px; border-right: 1px solid #d2d0ce; }
.bottom-tabs { display: flex; height: 32px; padding-left: 1px; border: solid #c4c1be; border-width: 0 1px 1px 0; background: #f5f5f5; }
.bottom-tabs button { position: relative; width: 48px; height: 29px; }
.bottom-tabs svg { position: absolute; inset: 0; width: 100%; height: 100%; }
.bottom-tabs span { position: relative; }
.vgrip {
  align-self: center;
  justify-self: center;
  width: 4px;
  height: 8px;
  background: repeating-linear-gradient(#c6c4c2 0 1px, transparent 1px 3px);
}

/* Document area */
.mdi { display: flex; flex-direction: column; min-width: 0; }
.viewport { display: grid; flex: 1; min-height: 240px; contain: size; border-top: 1px solid #1f1f52; background: linear-gradient(#333366, #9696aa); }
.viewport svg { width: 100%; height: 100%; min-height: 0; }
.axes path { stroke-width: 2; }
.axes text { fill: #333339; font: 11px "DejaVu Sans", sans-serif; }
.doc-tabs { display: flex; align-items: flex-start; height: 31px; border-top: 1px solid #c4c1be; }
.doc-tab {
  display: flex;
  align-items: center;
  gap: 8px;
  height: 28px;
  padding: 0 11px 0 8px;
  border: 1px solid #c4c1be;
  border-top: 0;
  border-radius: 0 0 4px 4px;
  background: linear-gradient(#dcdad7, #f2f1f0 60%);
}
.doc-tab a { color: inherit; text-decoration: none; white-space: nowrap; }
.doc-tab.active { height: 30px; padding-left: 6px; background: #fbfbfc; }
.doc-tab svg { width: 12px; height: 12px; }
.doc-tab .logo { width: 16px; height: 16px; }
.doc-tab.active a { margin-right: 3px; }
```
